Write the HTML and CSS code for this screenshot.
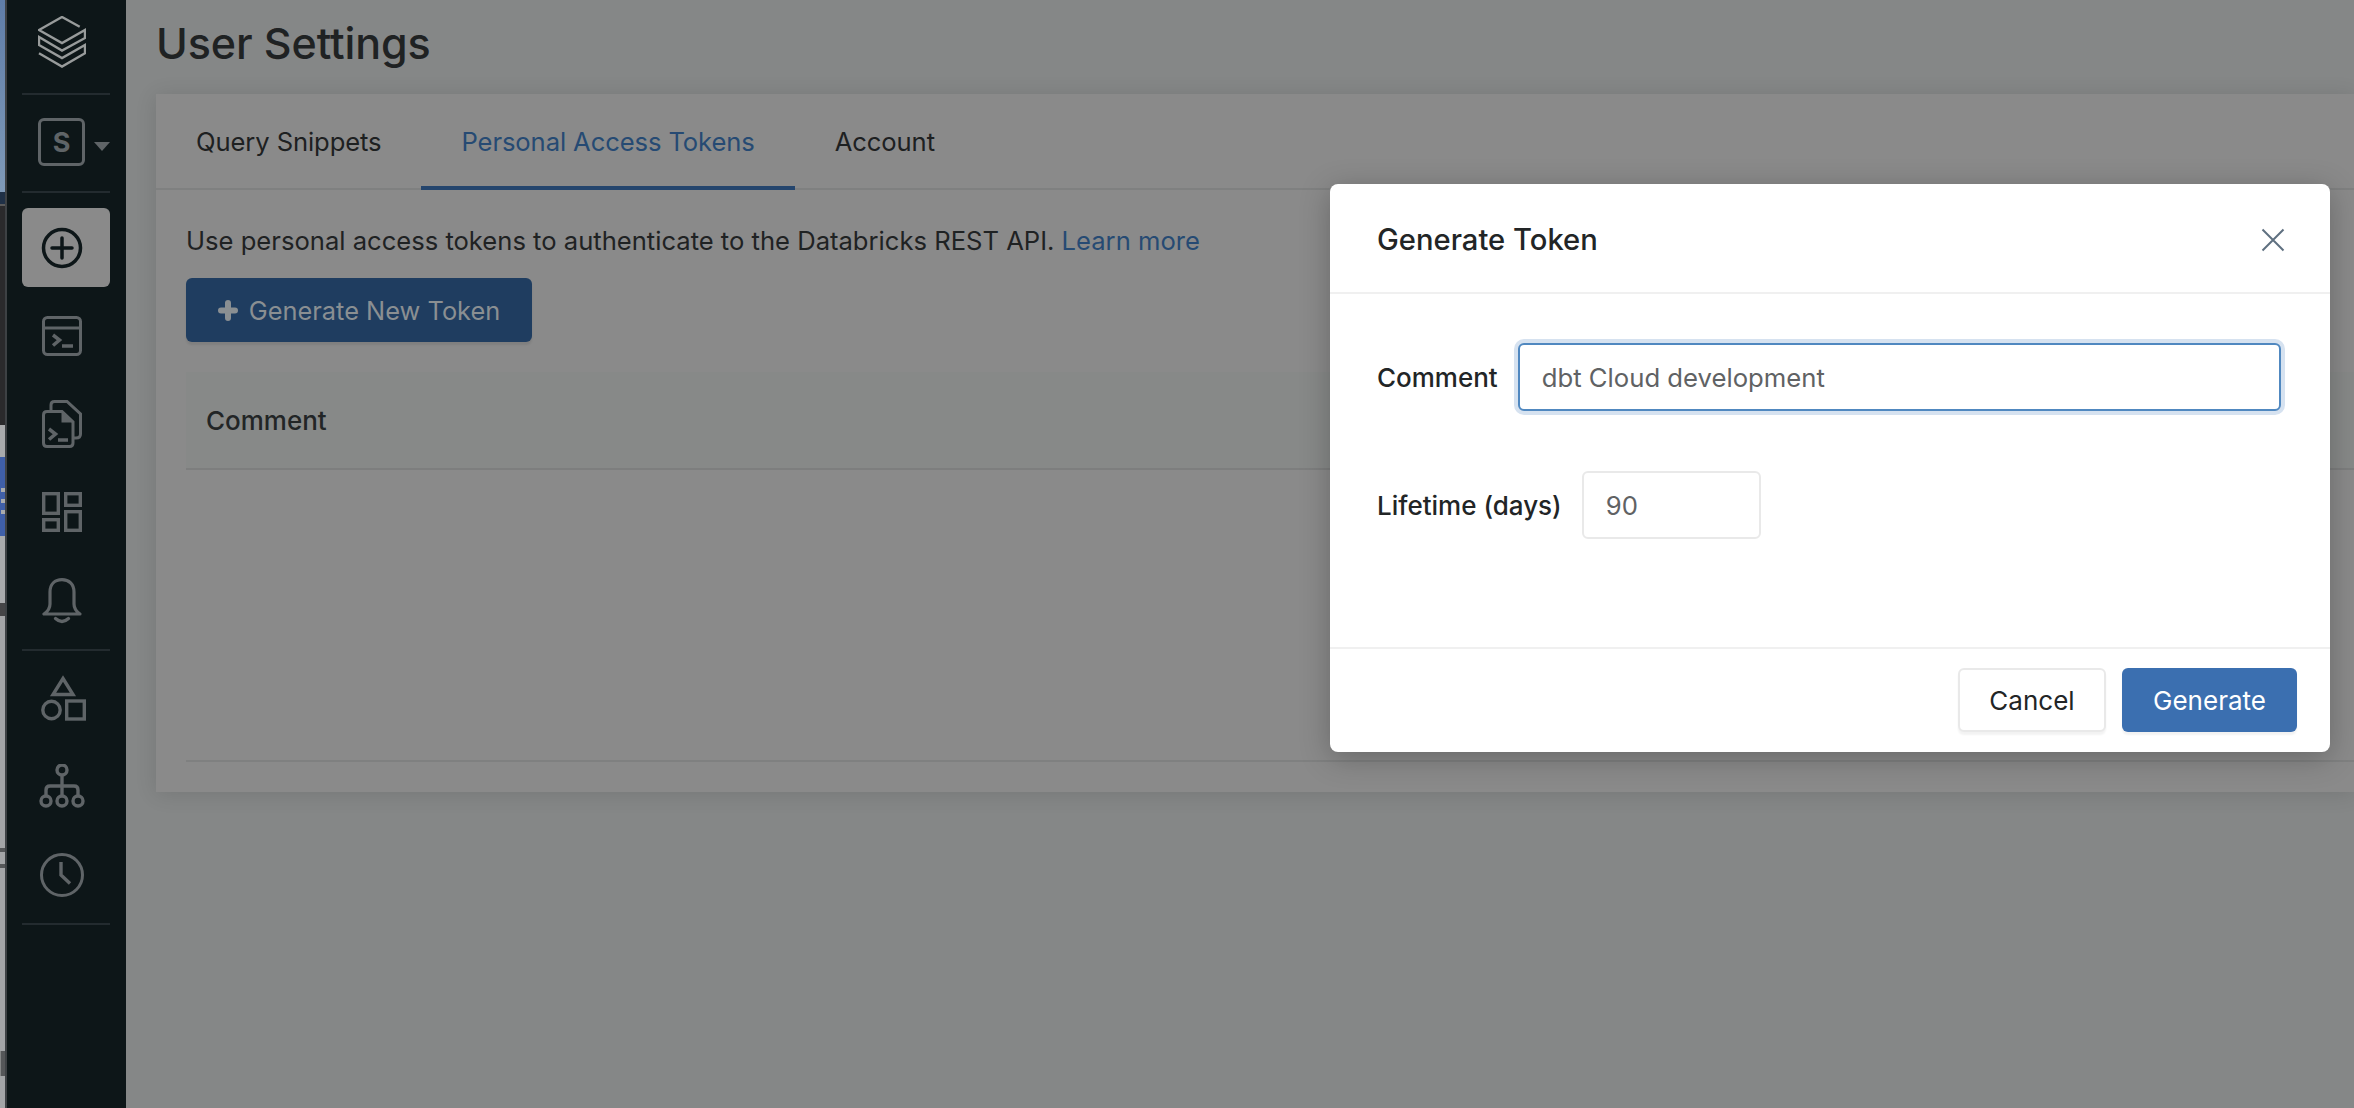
FILE: index.html

```html
<!DOCTYPE html>
<html lang="en">

<head>
    <link rel="stylesheet" href="styles.css">
    <meta charset="UTF-8">
    <title>User Settings</title>
</head>

<body>
    <div class="desktop-edge">
        <div class="edge-photo"></div>
        <div class="edge-shore"></div>
        <div class="edge-dark"></div>
        <div class="edge-light edge-h32"></div>
        <div class="edge-blue">
            <span class="edge-square"></span>
            <span class="edge-square"></span>
            <span class="edge-square"></span>
        </div>
        <div class="edge-light edge-h67"></div>
        <div class="edge-corner"></div>
        <div class="edge-grey edge-h232"></div>
        <div class="edge-tick"></div>
        <div class="edge-grey edge-h12"></div>
        <div class="edge-tick"></div>
        <div class="edge-grey edge-h183"></div>
        <div class="edge-bar"></div>
        <div class="edge-grey edge-fill"></div>
    </div>

    <nav class="sidebar">
        <div class="nav-group nav-logo">
            <svg class="icon" width="48" height="52" viewBox="0 0 48 52" fill="none" stroke="#989b9b" stroke-width="2.4">
                <path d="M41.7 10.7 L24 1 L1 14 L24 27 L47 14 V22 L24 34.5 L1 21 V29 L24 42 L47 29 V37.3 L24 50.5 L1 37.3"/>
            </svg>
        </div>
        <div class="nav-sep"></div>
        <div class="nav-group nav-workspace">
            <div class="workspace-box">S</div>
            <div class="workspace-caret"></div>
        </div>
        <div class="nav-sep"></div>
        <div class="nav-item nav-item-active">
            <svg class="icon" width="42" height="42" viewBox="0 0 42 42" fill="none" stroke="#0d1618" stroke-width="3.5">
                <circle cx="21" cy="21" r="18.5"/>
                <path d="M21 11 V31 M11 21 H31" stroke-linecap="round"/>
            </svg>
        </div>
        <div class="nav-item nav-terminal">
            <svg class="icon" width="40" height="40" viewBox="0 0 40 40" fill="none" stroke="#5f6467" stroke-width="3">
                <rect x="1.5" y="1.5" width="37" height="37" rx="4"/>
                <path d="M1.5 12 H38.5"/>
                <path d="M11 19 L17.5 24 L11 29.5" stroke-width="3.5"/>
                <path d="M20 30 H31" stroke-width="3.5"/>
            </svg>
        </div>
        <div class="nav-item nav-notebook">
            <svg class="icon" width="40" height="48" viewBox="0 0 40 48" fill="none" stroke="#5f6467" stroke-width="3">
                <path d="M9 10 V5 Q9 1.5 12.5 1.5 H25 L38.5 14 V34 Q38.5 38 34 38 H31"/>
                <path d="M5 11.5 H20 L31 22 V43 Q31 46.5 27.5 46.5 H5 Q1.5 46.5 1.5 43 V15 Q1.5 11.5 5 11.5 Z"/>
                <path d="M21 12 V21 H30" fill="#5f6467"/>
                <path d="M7 29 L13.5 34 L7 39.5" stroke-width="3.5"/>
                <path d="M16 40 H26" stroke-width="3.5"/>
            </svg>
        </div>
        <div class="nav-item nav-dashboard">
            <svg class="icon" width="40" height="40" viewBox="0 0 40 40" fill="none" stroke="#5f6467" stroke-width="3.4">
                <rect x="1.7" y="1.7" width="14.6" height="19.6"/>
                <rect x="23.7" y="1.7" width="14.6" height="11.6"/>
                <rect x="1.7" y="27.7" width="14.6" height="10.6"/>
                <rect x="23.7" y="19.7" width="14.6" height="18.6"/>
            </svg>
        </div>
        <div class="nav-item nav-bell">
            <svg class="icon" width="40" height="46" viewBox="0 0 40 46" fill="none" stroke="#5f6467" stroke-width="3.2" stroke-linejoin="round">
                <path d="M2 36 H38 Q32 32 32 26 V14 C32 6 27 1.6 20 1.6 C13 1.6 8 6 8 14 V26 Q8 32 2 36 Z"/>
                <path d="M13.5 40.5 Q20 46.5 26.5 40.5" stroke-linecap="round"/>
            </svg>
        </div>
        <div class="nav-sep"></div>
        <div class="nav-item nav-shapes">
            <svg class="icon" width="46" height="46" viewBox="0 0 46 46" fill="none" stroke="#5f6467" stroke-width="3.4">
                <path d="M23 3.5 L33 19.5 H13 Z"/>
                <circle cx="11.5" cy="35" r="8.7"/>
                <rect x="26.7" y="26" width="17.6" height="18"/>
            </svg>
        </div>
        <div class="nav-item nav-tree">
            <svg class="icon" width="46" height="44" viewBox="0 0 46 44" fill="none" stroke="#5f6467" stroke-width="3.4">
                <circle cx="23" cy="6" r="5"/>
                <circle cx="7" cy="37" r="5"/>
                <circle cx="23" cy="37" r="5"/>
                <circle cx="39" cy="37" r="5"/>
                <path d="M23 11 V32"/>
                <path d="M7 32 V26 Q7 22 11 22 H35 Q39 22 39 26 V32"/>
            </svg>
        </div>
        <div class="nav-item nav-clock">
            <svg class="icon" width="44" height="44" viewBox="0 0 44 44" fill="none" stroke="#5f6467" stroke-width="3">
                <circle cx="22" cy="22" r="20.5"/>
                <path d="M21 9 V22 L30 30.5" stroke-width="3.4"/>
            </svg>
        </div>
        <div class="nav-sep"></div>
    </nav>

    <main class="page">
        <h1 class="page-title">User Settings</h1>

        <section class="card">
            <div class="tabs">
                <a class="tab">Query Snippets</a>
                <a class="tab tab-active">Personal Access Tokens</a>
                <a class="tab">Account</a>
            </div>
            <div class="card-body">
                <p class="intro">Use personal access tokens to authenticate to the Databricks REST API. <a class="link">Learn more</a></p>
                <button class="btn-new">
                    <svg class="btn-plus" width="20" height="21" viewBox="0 0 20 21" fill="none" stroke="#8a8f92" stroke-width="6" stroke-linecap="round">
                        <path d="M10 3 V18 M3 10.5 H17"/>
                    </svg>
                    Generate New Token
                </button>
                <div class="table-head">Comment</div>
                <div class="table-rows"></div>
            </div>
        </section>
    </main>

    <div class="modal">
        <div class="modal-header">
            <h2 class="modal-title">Generate Token</h2>
            <svg class="modal-close" width="24" height="24" viewBox="0 0 24 24" fill="none" stroke="#5f7080" stroke-width="2">
                <path d="M1.5 1.5 L22.5 22.5 M22.5 1.5 L1.5 22.5"/>
            </svg>
        </div>
        <div class="modal-body">
            <div class="form-row">
                <label class="form-label">Comment</label>
                <input class="form-input form-input-focus" type="text" value="dbt Cloud development">
            </div>
            <div class="form-row form-row-days">
                <label class="form-label">Lifetime (days)</label>
                <input class="form-input form-input-days" type="text" value="90">
            </div>
        </div>
        <div class="modal-footer">
            <button class="btn btn-cancel">Cancel</button>
            <button class="btn btn-primary">Generate</button>
        </div>
    </div>
</body>

</html>
```

FILE: styles.css

```css
* {
    box-sizing: border-box;
}
body {
    margin: 0;
    height: 1108px;
    overflow: hidden;
    display: flex;
    font-family: Inter, "Noto Sans", sans-serif;
    color: #222526;
    background-color: #858787;
}
.desktop-edge {
    width: 7px;
    flex: none;
    display: flex;
    flex-direction: column;
    border-right: 2px solid #3d4144;
}
.edge-photo {
    height: 192px;
    background: linear-gradient(#5f7da8, #7f9ab8);
}
.edge-shore {
    height: 14px;
    background-color: #1f3046;
    border-bottom: 2px solid #5a5a5a;
}
.edge-dark {
    height: 219px;
    background-color: #2a2a2c;
}
.edge-light {
    background-color: #a9abad;
}
.edge-grey {
    background-color: #a3a5a7;
}
.edge-h32 {
    height: 32px;
}
.edge-h67 {
    height: 67px;
}
.edge-h232 {
    height: 232px;
}
.edge-h12 {
    height: 12px;
}
.edge-h183 {
    height: 183px;
}
.edge-blue {
    height: 79px;
    background-color: #3f5fa8;
    padding: 31px 0 0 1px;
    display: flex;
    flex-direction: column;
    gap: 7px;
}
.edge-square {
    height: 4px;
    background-color: #a9abad;
}
.edge-corner {
    height: 13px;
    background-color: #454547;
}
.edge-tick {
    height: 4px;
    background-color: #555759;
}
.edge-bar {
    height: 25px;
    margin-left: 1px;
    background-color: #555759;
}
.edge-fill {
    flex: 1;
}
.sidebar {
    width: 119px;
    flex: none;
    background-color: #0d1618;
    padding: 16px 16px 0 15px;
    display: flex;
    flex-direction: column;
    align-items: stretch;
}
.icon {
    display: block;
}
.nav-group,
.nav-item {
    display: flex;
    padding-left: 20px;
    padding-top: 29px;
}
.nav-logo {
    height: 77px;
    padding: 0 0 0 16px;
}
.nav-sep {
    height: 2px;
    flex: none;
    background-color: #232b2f;
}
.nav-workspace {
    height: 96px;
    padding: 23px 0 0 16px;
}
.workspace-box {
    width: 48px;
    height: 48px;
    border: 3px solid #5f6467;
    border-radius: 6px;
    color: #5f6467;
    font-size: 27px;
    font-weight: 700;
    display: flex;
    align-items: center;
    justify-content: center;
}
.workspace-caret {
    margin: 24px 0 0 9px;
    width: 0;
    height: 0;
    border-left: 8px solid transparent;
    border-right: 8px solid transparent;
    border-top: 9px solid #5f6467;
}
.nav-item-active {
    height: 79px;
    margin-top: 15px;
    border-radius: 6px;
    background-color: #8a8a8a;
    padding: 0 0 0 19px;
    align-items: center;
}
.nav-terminal {
    height: 84px;
}
.nav-notebook {
    height: 92px;
}
.nav-dashboard {
    height: 86px;
}
.nav-bell {
    height: 100px;
}
.nav-shapes {
    padding: 24px 0 0 18px;
    height: 89px;
}
.nav-tree {
    padding: 24px 0 0 17px;
    height: 89px;
}
.nav-clock {
    padding: 24px 0 0 18px;
    height: 94px;
}
.page {
    flex: 1;
    min-width: 0;
    padding: 0 0 0 30px;
}
.page-title {
    margin: 0;
    height: 94px;
    padding-top: 17px;
    font-size: 43px;
    line-height: 52px;
    font-weight: 500;
    letter-spacing: -0.1px;
    color: #1f2223;
}
.card {
    height: 698px;
    background-color: #8a8a8a;
    box-shadow: 0 2px 20px rgba(0, 0, 0, .12);
}
.tabs {
    height: 96px;
    display: flex;
    border-bottom: 2px solid #7f8080;
}
.tab {
    height: 96px;
    padding: 0 40px;
    font-size: 25.6px;
    letter-spacing: -0.1px;
    line-height: 95px;
    color: #1d2021;
}
.tab-active {
    color: #264a73;
    border-bottom: 4px solid #24456d;
}
.card-body {
    padding: 0 0 0 30px;
}
.intro {
    margin: 0;
    padding-top: 35px;
    height: 88px;
    font-size: 25.6px;
    line-height: 32px;
    color: #1f2223;
}
.link {
    color: #264a73;
}
.btn-new {
    display: flex;
    align-items: center;
    justify-content: center;
    gap: 11px;
    width: 346px;
    height: 64px;
    border: none;
    border-radius: 6px;
    background-color: #1f3d60;
    color: #8a8f92;
    font-family: inherit;
    font-size: 25.4px;
    padding: 0;
    box-shadow: 0 3px 2px rgba(0, 0, 0, .08);
}
.btn-plus {
    display: block;
}
.table-head {
    margin-top: 30px;
    height: 98px;
    padding-left: 20px;
    font-size: 26px;
    font-weight: 500;
    line-height: 97px;
    background-color: #878988;
    border-bottom: 2px solid #7d7e7e;
}
.table-rows {
    height: 292px;
    border-bottom: 2px solid #7f8080;
}
.modal {
    position: absolute;
    left: 1330px;
    top: 184px;
    width: 1000px;
    height: 568px;
    background-color: #fff;
    border-radius: 8px;
    box-shadow: 0 6px 30px rgba(0, 0, 0, .25);
    display: flex;
    flex-direction: column;
}
.modal-header {
    height: 110px;
    flex: none;
    padding: 3px 45px 0 47px;
    display: flex;
    align-items: center;
    justify-content: space-between;
    border-bottom: 2px solid #f0f0f0;
}
.modal-title {
    margin: 0;
    font-size: 29.2px;
    font-weight: 500;
    color: #222526;
}
.modal-close {
    display: block;
}
.modal-body {
    flex: 1;
    padding: 49px 49px 0 47px;
}
.form-row {
    display: flex;
    align-items: center;
    gap: 20px;
}
.form-row-days {
    margin-top: 60px;
}
.form-label {
    font-size: 26px;
    font-weight: 500;
    color: #222526;
}
.form-input {
    height: 68px;
    padding: 0 22px;
    background-color: #fff;
    border: 2px solid #e9e9e9;
    border-radius: 6px;
    font-family: inherit;
    font-size: 25.7px;
    color: #606264;
    outline: none;
}
.form-input-focus {
    flex: 1;
    border-color: #5088c0;
    box-shadow: 0 0 0 4px #d6e2f0;
}
.form-input-days {
    width: 179px;
}
.modal-footer {
    height: 105px;
    flex: none;
    display: flex;
    justify-content: flex-end;
    gap: 16px;
    padding: 19px 33px 0 0;
    border-top: 2px solid #f0f0f0;
}
.btn {
    height: 64px;
    border-radius: 6px;
    font-family: inherit;
    font-size: 26px;
    padding: 0;
    box-shadow: 0 3px 2px rgba(0, 0, 0, .05);
}
.btn-cancel {
    width: 148px;
    background-color: #fff;
    border: 2px solid #e9e9e9;
    color: #222526;
}
.btn-primary {
    width: 175px;
    background-color: #3b6fb0;
    border: none;
    color: #fff;
}
```
